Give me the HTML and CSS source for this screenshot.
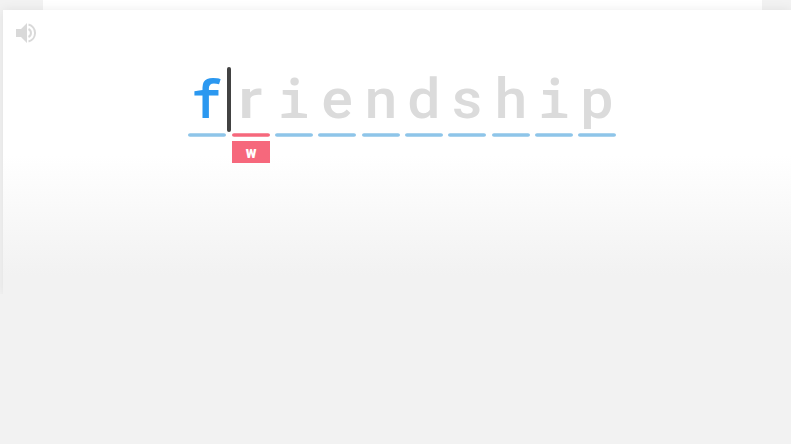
FILE: index.html
```html
<!DOCTYPE html>
<html lang="en">
<head>
<meta charset="utf-8">
<title>Spelling</title>
<link rel="stylesheet" href="styles.css">
</head>
<body>
<div class="sheet"></div>
<main class="card">
<button class="sound" aria-label="Play sound"><svg viewBox="0 0 24 24"><path d="M2 8v8h5l6 6V2L7 8z"/><path class="wave" d="M14.5 3.5a8.8 8.8 0 0 1 0 17M14.5 8a4.5 4.5 0 0 1 0 8"/></svg></button>
<div class="word">
<div class="slot typed"><span class="mono">f</span></div>
<div class="slot wrong"><span class="plain r">r</span><span class="caret"></span><span class="tip"><span class="mini">w</span></span></div>
<div class="slot"><span class="mono">i</span></div>
<div class="slot"><span class="plain">e</span></div>
<div class="slot"><span class="plain">n</span></div>
<div class="slot"><span class="plain">d</span></div>
<div class="slot"><span class="plain">s</span></div>
<div class="slot"><span class="plain">h</span></div>
<div class="slot"><span class="mono">i</span></div>
<div class="slot"><span class="plain">p</span></div>
</div>
</main>
</body>
</html>
```
FILE: styles.css
```css
* { box-sizing: border-box; }
body { margin: 0; height: 444px; overflow: hidden; background: #f2f2f2; font-family: Roboto, sans-serif; }
.sheet { height: 10px; margin: 0 29px 0 43px; background: #fff; }
.card { height: 284px; margin-left: 3px; background: linear-gradient(#fff 0, #fff 145px, #f2f2f2 265px); box-shadow: 0 0 10px rgba(0,0,0,.08); clip-path: inset(-10px 0 0 -3px); }
.sound { display: block; width: 24px; height: 24px; margin: 0 0 0 11px; padding: 0; border: 0; background: none; transform: translateY(11px); }
.sound svg { display: block; fill: #d9d9d9; }
.wave { fill: none; stroke: #d9d9d9; stroke-width: 2; }
.word { display: flex; gap: 5.35px; padding: 33px 0 0 185.3px; }
.slot { position: relative; width: 38px; height: 70px; color: #dbdbdb; font: 500 55px/62px Roboto, sans-serif; text-align: center; }
.slot::after { content: ""; position: absolute; left: 0; bottom: 0; width: 38px; height: 4px; border: .5px solid #fff; border-width: .5px 0; border-radius: 2px; background: #8ec5e9; transform: scaleY(.85); border: 0; }
.typed { color: #2b98f0; }
.slot.wrong::after { background: #f6687c; }
.plain { display: block; transform: translateY(1px) scaleX(1.06); }
.r { transform: translate(-.8px, 1px) scaleX(1.25); }
.mono { display: block; font: 600 53px/61px "Noto Sans Mono", monospace; }
.typed .mono { font-weight: 600; transform: translate(-.5px, -.5px) scaleX(.97); }
.caret { position: absolute; left: -4.5px; top: 0; width: 3.5px; height: 64.5px; border-radius: 2px; background: #424242; }
.tip { position: absolute; left: 0; top: 74px; width: 38px; height: 22px; background: #f6687c; color: #fff; font: 900 16px/23px Roboto, sans-serif; }
.mini { display: block; transform: scaleX(.92); }
```
